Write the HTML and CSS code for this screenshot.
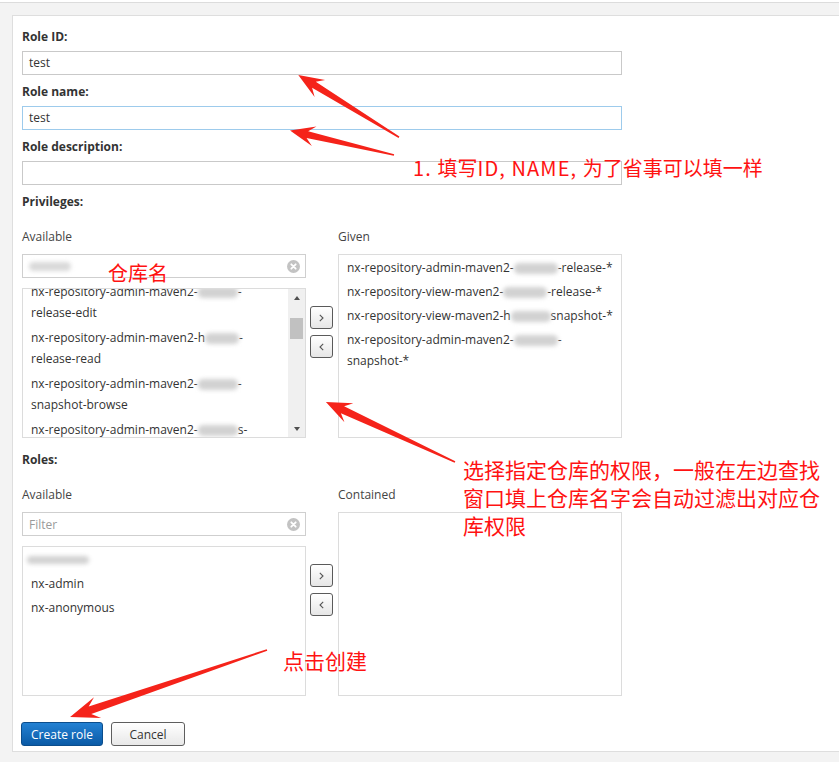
FILE: index.html
```html
<!DOCTYPE html>
<html>
<head>
<meta charset="utf-8">
<title>Create role</title>
<link rel="stylesheet" href="styles.css">
</head>
<body>
<div class="page">
  <div class="panel">
    <div class="field">
      <div class="lbl">Role ID:</div>
      <div class="input">test</div>
    </div>
    <div class="field">
      <div class="lbl">Role name:</div>
      <div class="input focus">test</div>
    </div>
    <div class="field">
      <div class="lbl">Role description:</div>
      <div class="input"></div>
    </div>

    <div class="lbl section">Privileges:</div>
    <div class="dual">
      <div class="col">
        <div class="sub">Available</div>
        <div class="filter">
          <span class="blur b-filter"></span>
          <svg class="clear" width="13" height="13" viewBox="0 0 13 13"><circle cx="6.5" cy="6.5" r="6.5" fill="#c3c3c3"/><path d="M4.3 4.3 L8.7 8.7 M8.7 4.3 L4.3 8.7" stroke="#fff" stroke-width="1.8" stroke-linecap="round"/></svg>
        </div>
        <div class="list scroll">
          <div class="viewport">
            <div class="items shift">
              <div class="item">nx-repository-admin-maven2-<span class="blur b-mid"></span>-<br>release-edit</div>
              <div class="item">nx-repository-admin-maven2-h<span class="blur b-mid2"></span>-<br>release-read</div>
              <div class="item">nx-repository-admin-maven2-<span class="blur b-mid"></span>-<br>snapshot-browse</div>
              <div class="item">nx-repository-admin-maven2-<span class="blur b-mid"></span>s-<br>snapshot-read</div>
            </div>
          </div>
          <div class="sbar">
            <div class="sbtn up"></div>
            <div class="track"><div class="thumb"></div></div>
            <div class="sbtn down"></div>
          </div>
        </div>
      </div>
      <div class="mid">
        <button class="mv"><svg width="5" height="8" viewBox="0 0 5 8"><polyline points="0.8,0.8 4,4 0.8,7.2" fill="none" stroke="#555" stroke-width="1.1"/></svg></button>
        <button class="mv"><svg width="5" height="8" viewBox="0 0 5 8"><polyline points="4.2,0.8 1,4 4.2,7.2" fill="none" stroke="#555" stroke-width="1.1"/></svg></button>
      </div>
      <div class="col">
        <div class="sub">Given</div>
        <div class="list tall">
          <div class="items">
            <div class="item">nx-repository-admin-maven2-<span class="blur b-g1"></span>-release-*</div>
            <div class="item">nx-repository-view-maven2-<span class="blur b-g1"></span>-release-*</div>
            <div class="item">nx-repository-view-maven2-h<span class="blur b-g3"></span>snapshot-*</div>
            <div class="item">nx-repository-admin-maven2-<span class="blur b-g1"></span>-<br>snapshot-*</div>
          </div>
        </div>
      </div>
    </div>

    <div class="lbl section">Roles:</div>
    <div class="dual">
      <div class="col">
        <div class="sub">Available</div>
        <div class="filter">
          <span class="ph">Filter</span>
          <svg class="clear" width="13" height="13" viewBox="0 0 13 13"><circle cx="6.5" cy="6.5" r="6.5" fill="#c3c3c3"/><path d="M4.3 4.3 L8.7 8.7 M8.7 4.3 L4.3 8.7" stroke="#fff" stroke-width="1.8" stroke-linecap="round"/></svg>
        </div>
        <div class="list">
          <div class="items">
            <div class="item"><span class="blur b-role"></span></div>
            <div class="item">nx-admin</div>
            <div class="item">nx-anonymous</div>
          </div>
        </div>
      </div>
      <div class="mid">
        <button class="mv"><svg width="5" height="8" viewBox="0 0 5 8"><polyline points="0.8,0.8 4,4 0.8,7.2" fill="none" stroke="#555" stroke-width="1.1"/></svg></button>
        <button class="mv"><svg width="5" height="8" viewBox="0 0 5 8"><polyline points="4.2,0.8 1,4 4.2,7.2" fill="none" stroke="#555" stroke-width="1.1"/></svg></button>
      </div>
      <div class="col">
        <div class="sub">Contained</div>
        <div class="list tall"></div>
      </div>
    </div>

    <div class="actions">
      <button class="btn primary">Create role</button>
      <button class="btn secondary">Cancel</button>
    </div>
  </div>
</div>

<svg class="overlay" width="839" height="763" viewBox="0 0 839 763">
  <g fill="#f5231a">
    <g transform="translate(399 137.3) rotate(211.7)">
      <polygon points="0,-0.8 100,-3.5 93,-10 118.4,0 93,10 100,3.5 0,0.8"/>
    </g>
    <g transform="translate(394 155) rotate(193.2)">
      <polygon points="0,-0.8 89,-3.5 82,-10 106.8,0 82,10 89,3.5 0,0.8"/>
    </g>
    <g transform="translate(455 462) rotate(204.9)">
      <polygon points="0,-0.8 124,-3.8 117,-10.5 142.3,0 117,10.5 124,3.8 0,0.8"/>
    </g>
    <g transform="translate(267 650) rotate(161.2)">
      <polygon points="0,-0.8 187,-4 179,-11 208,0 179,11 187,4 0,0.8"/>
    </g>
  </g>
</svg>
<div class="note n1"><span class="lat">1. </span>填写<span class="lat">ID, NAME, </span>为了省事可以填一样</div>
<div class="note n2">仓库名</div>
<div class="note n3">选择指定仓库的权限，一般在左边查找<br>窗口填上仓库名字会自动过滤出对应仓<br>库权限</div>
<div class="note n4">点击创建</div>
</body>
</html>
```

FILE: styles.css
```css
html, body {
  margin: 0;
  padding: 0;
}
body {
  background: #fff;
  font-family: "Open Sans", "Liberation Sans", sans-serif;
  font-size: 12px;
  color: #333;
  position: relative;
  width: 839px;
  height: 763px;
  overflow: hidden;
}
.page {
  margin-top: 2px;
  border-top: 1px solid #dcdcdc;
  background: #f3f3f3;
  padding: 12px 0 10px 12px;
}
.panel {
  background: #fff;
  border: 1px solid #dedede;
  border-right: 0;
  padding: 13px 0 5px 9px;
}
.lbl {
  font-weight: 700;
  line-height: 16px;
  margin-bottom: 6px;
  color: #333;
}
.lbl.section {
  margin-bottom: 19px;
}
.input {
  width: 600px;
  height: 24px;
  box-sizing: border-box;
  border: 1px solid #c9c9c9;
  padding: 0 6px;
  line-height: 22px;
  margin-bottom: 9px;
  color: #333;
}
.input.focus {
  border-color: #9dcbec;
}
.dual {
  display: flex;
  gap: 4px;
  width: 600px;
  margin-bottom: 14px;
}
.col {
  width: 284px;
}
.sub {
  line-height: 16px;
  margin-bottom: 9px;
  color: #444;
}
.filter {
  height: 24px;
  box-sizing: border-box;
  border: 1px solid #cfcfcf;
  margin-bottom: 10px;
  display: flex;
  align-items: center;
  justify-content: space-between;
  padding: 0 5px 0 6px;
}
.ph {
  color: #9a9a9a;
}
.clear {
  display: block;
}
.list {
  height: 150px;
  box-sizing: border-box;
  border: 1px solid #dcdcdc;
  overflow: hidden;
}
.list.tall {
  height: 184px;
}
.list.scroll {
  display: flex;
}
.viewport {
  flex: 1;
  overflow: hidden;
}
.items.shift {
  margin-top: -10px;
}
.item {
  padding: 1.5px 8px;
  line-height: 21px;
  white-space: nowrap;
  color: #333;
}
.shift .item {
  padding: 2px 8px;
}
.blur {
  display: inline-block;
  vertical-align: middle;
  height: 11px;
  background: #d2d2d2;
  border-radius: 5px;
  filter: blur(2px);
}
.b-filter {
  width: 42px;
  height: 9px;
  background: #d9d9d9;
}
.b-mid { width: 40px; }
.b-mid2 { width: 34px; }
.b-g1 { width: 44px; }
.b-g3 { width: 40px; }
.b-role {
  width: 62px;
  height: 8px;
  margin-left: -4px;
}
.sbar {
  width: 17px;
  background: #f0f0f0;
  display: flex;
  flex-direction: column;
}
.sbtn {
  height: 17px;
  display: flex;
  align-items: center;
  justify-content: center;
}
.sbtn::before {
  content: "";
  border-left: 3.5px solid transparent;
  border-right: 3.5px solid transparent;
}
.up::before {
  border-bottom: 4px solid #505050;
}
.down::before {
  border-top: 4px solid #505050;
}
.track {
  flex: 1;
}
.thumb {
  margin: 12px 2px 0;
  height: 21px;
  background: #c1c1c1;
}
.mid {
  width: 24px;
  padding-top: 77px;
  display: flex;
  flex-direction: column;
  gap: 6px;
}
.mv {
  width: 23px;
  height: 23px;
  box-sizing: border-box;
  border: 1px solid #5a5a5a;
  border-radius: 3px;
  background: linear-gradient(#ffffff, #e6e6e6);
  padding: 0;
  display: flex;
  align-items: center;
  justify-content: center;
}
.mv svg {
  display: block;
}
.actions {
  display: flex;
  gap: 8px;
  margin-top: 26px;
  margin-left: -1px;
}
.btn {
  height: 24px;
  box-sizing: border-box;
  border-radius: 3px;
  font-family: "Open Sans", "Liberation Sans", sans-serif;
  font-size: 12px;
  padding: 0;
}
.primary {
  width: 82px;
  color: #fff;
  border: 1px solid #0b4d8c;
  background: linear-gradient(#2381d3, #0a5aa6);
}
.secondary {
  width: 74px;
  color: #333;
  border: 1px solid #5e5e5e;
  background: linear-gradient(#ffffff, #e8e8e8);
}
.overlay {
  position: absolute;
  left: 0;
  top: 0;
  pointer-events: none;
}
.note {
  position: absolute;
  color: #ff1212;
  font-family: "Noto Sans CJK SC", "Liberation Sans", sans-serif;
  white-space: nowrap;
}
.lat {
  letter-spacing: 1.1px;
}
.n1 {
  left: 413px;
  top: 155px;
  font-size: 20px;
  line-height: 26px;
}
.n2 {
  left: 108px;
  top: 260px;
  font-size: 20px;
  line-height: 26px;
}
.n3 {
  left: 463px;
  top: 455px;
  font-size: 21px;
  line-height: 28px;
}
.n4 {
  left: 283px;
  top: 646px;
  font-size: 21px;
  line-height: 28px;
}
```
